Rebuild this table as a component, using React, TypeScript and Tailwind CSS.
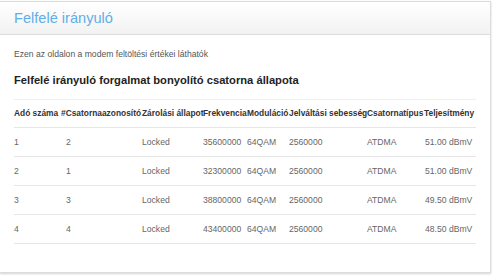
const headers = [
  'Adó száma',
  '#Csatornaazonosító',
  'Zárolási állapot',
  'Frekvencia',
  'Moduláció',
  'Jelváltási sebesség',
  'Csatornatípus',
  'Teljesítmény',
];

const rows = [
  ['1', '2', 'Locked', '35600000', '64QAM', '2560000', 'ATDMA', '51.00 dBmV'],
  ['2', '1', 'Locked', '32300000', '64QAM', '2560000', 'ATDMA', '51.00 dBmV'],
  ['3', '3', 'Locked', '38800000', '64QAM', '2560000', 'ATDMA', '49.50 dBmV'],
  ['4', '4', 'Locked', '43400000', '64QAM', '2560000', 'ATDMA', '48.50 dBmV'],
];

// second column's values sit a bit in from the header
const cellPad = ['', 'pl-[5px]', '', '', '', '', '', 'pl-px'];

const grid = 'grid grid-cols-[47px_81px_61px_44px_42px_78px_57px_52px]';

export default function App() {
  return (
    <div className="h-[280px] w-[496px] bg-white font-['Liberation_Sans',Arial,sans-serif]">
      <div className="mt-px h-[272px] w-[491px] border-t border-r border-b border-[#dcdcdc] bg-white shadow-[0_1px_2px_rgba(0,0,0,0.18)]">
        <div className="flex h-[33px] items-center border-b border-[#dedede] bg-gradient-to-b from-white to-[#f2f2f2] px-[14px]">
          <h1 className="text-[14.6px] leading-none text-[#62aee6]">Felfelé irányuló</h1>
        </div>

        <div className="px-[14px]">
          <p className="mt-[14px] text-[8.6px] leading-[10px] text-[#555]">
            Ezen az oldalon a modem feltöltési értékei láthatók
          </p>
          <h2 className="mt-[14px] text-[11.2px] font-bold leading-[14px] text-[#222]">
            Felfelé irányuló forgalmat bonyolító csatorna állapota
          </h2>

          <div className="mt-[12px] w-[462px] border-t border-[#efefef]">
            <div className={`${grid} h-[28px] items-center border-b border-[#e6e6e6] text-[8.4px] font-bold text-[#333]`}>
              {headers.map((h) => (
                <div key={h} className="whitespace-nowrap">
                  {h}
                </div>
              ))}
            </div>
            {rows.map((r, i) => (
              <div
                key={i}
                className={`${grid} h-[29px] items-center border-b border-[#e6e6e6] text-[8.6px] text-[#666]`}
              >
                {r.map((c, j) => (
                  <div key={j} className={`whitespace-nowrap ${cellPad[j]}`}>
                    {c}
                  </div>
                ))}
              </div>
            ))}
          </div>
        </div>
      </div>
    </div>
  );
}
